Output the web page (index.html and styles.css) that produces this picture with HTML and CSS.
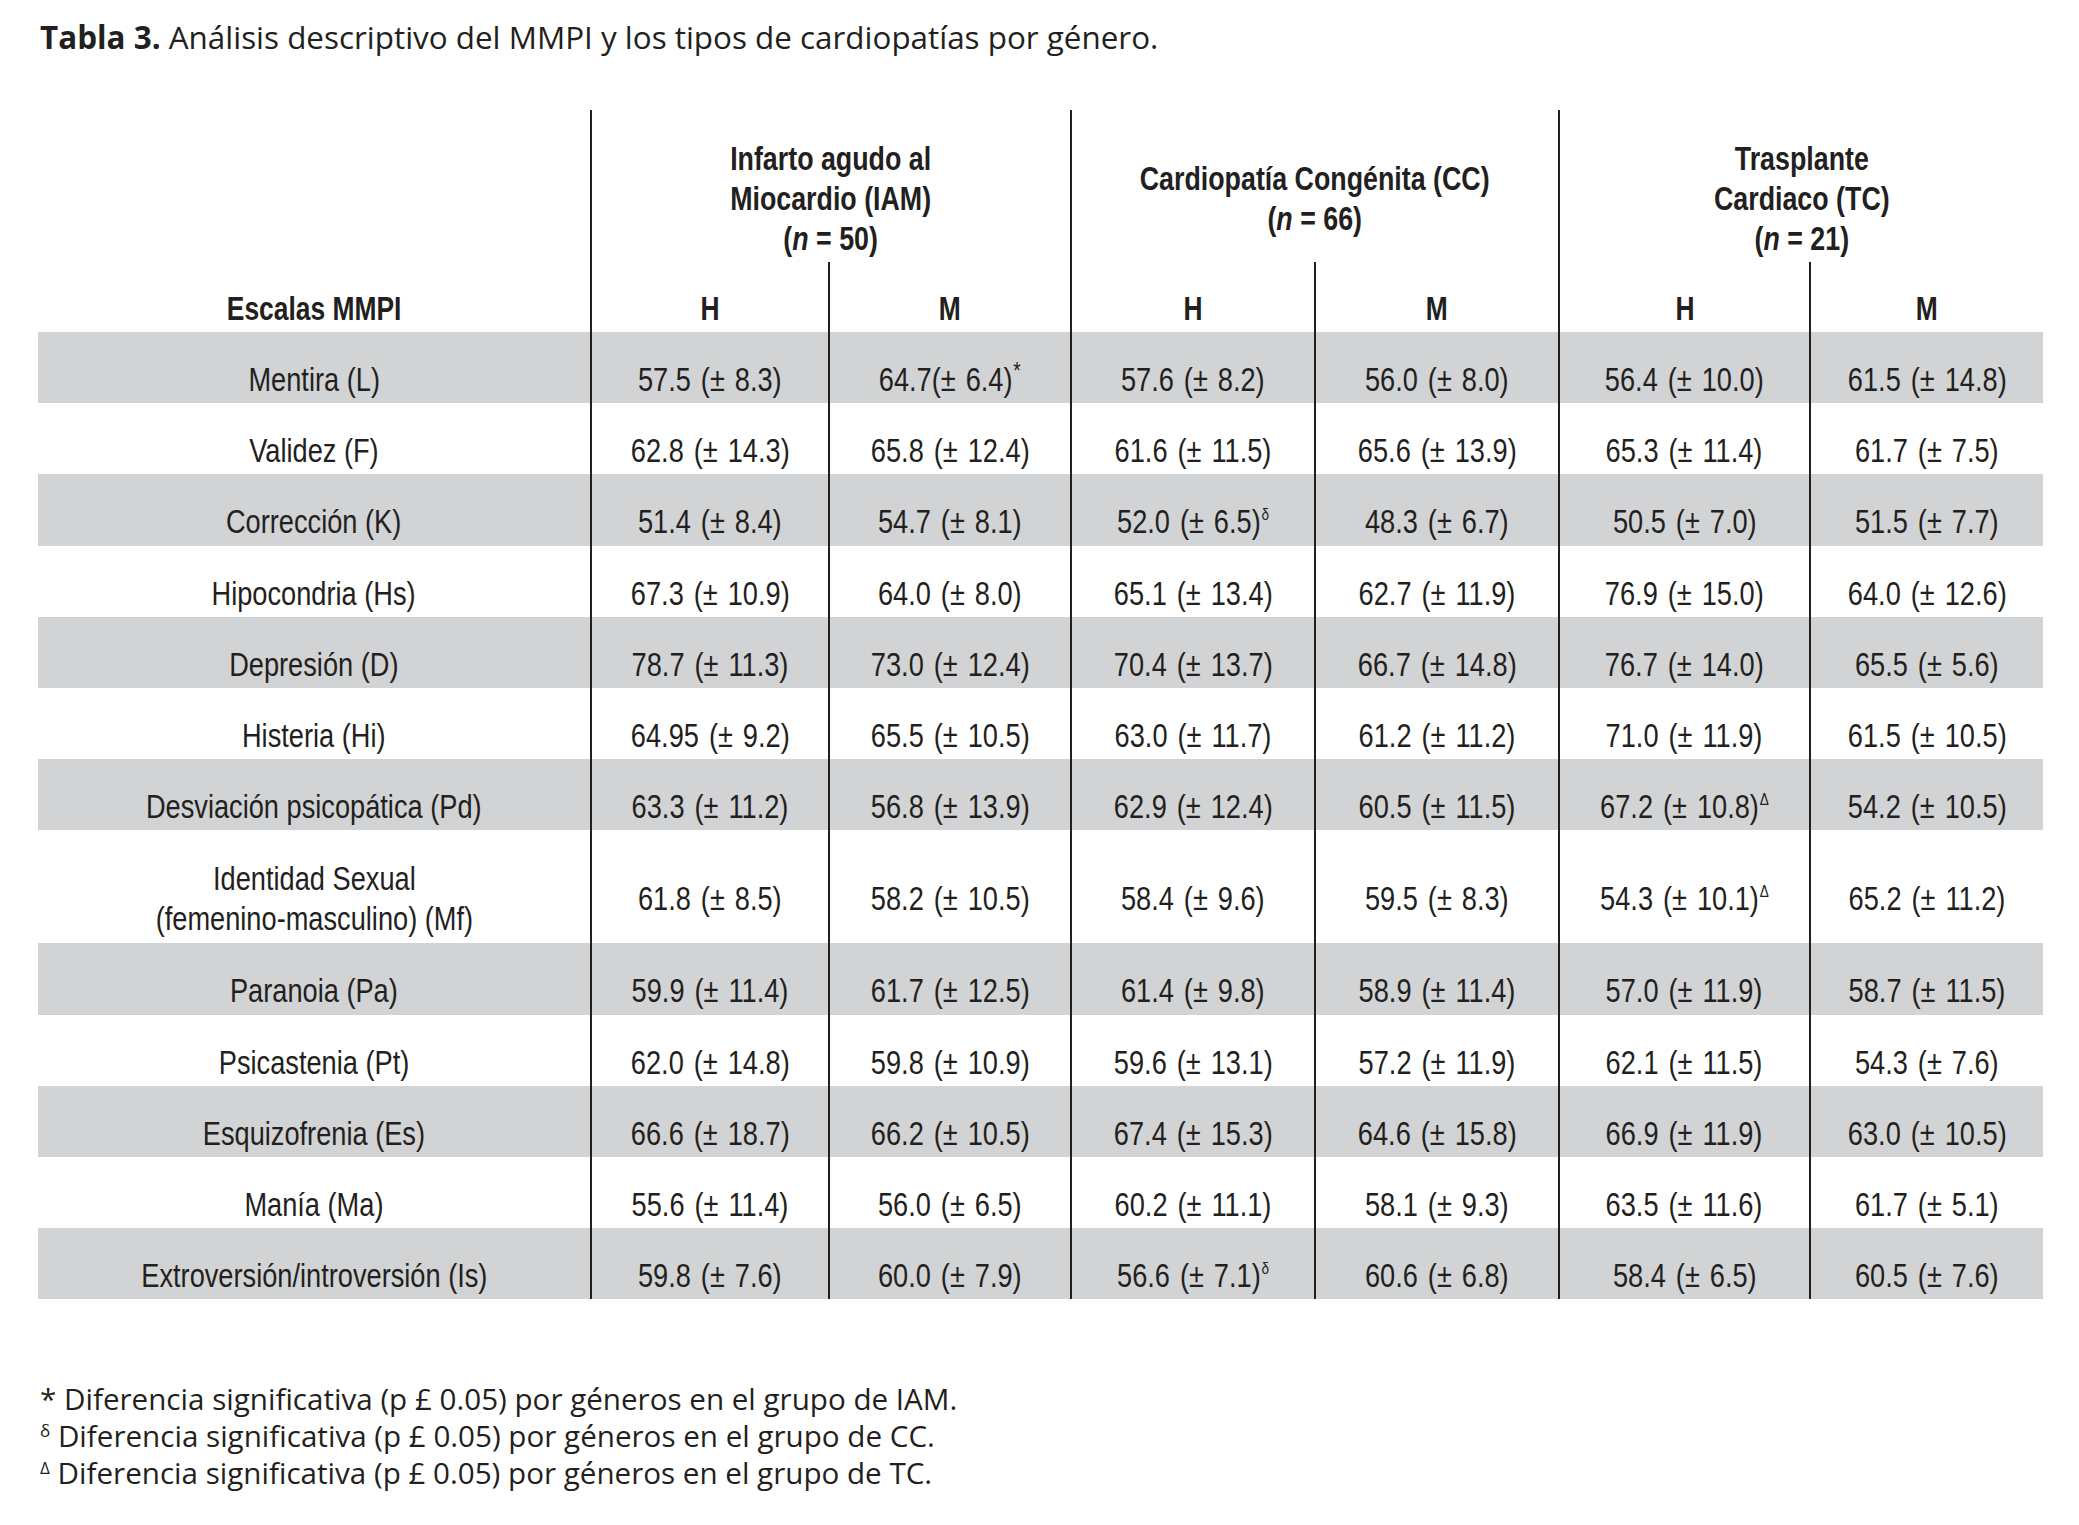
FILE: index.html
```html
<!DOCTYPE html>
<html lang="es">
<head>
<meta charset="utf-8">
<title>Tabla 3</title>
<link rel="stylesheet" href="styles.css">
</head>
<body>
<div class="page">
  <p class="caption"><b>Tabla 3.</b> Análisis descriptivo del MMPI y los tipos de cardiopatías por género.</p>

  <div class="table">
    <div class="blank"></div>
    <div class="group"><span class="t">Infarto agudo al<br>Miocardio (IAM)<br>(<i>n</i> = 50)</span></div>
    <div class="group"><span class="t">Cardiopatía Congénita (CC)<br>(<i>n</i> = 66)</span></div>
    <div class="group"><span class="t">Trasplante<br>Cardiaco (TC)<br>(<i>n</i> = 21)</span></div>

    <div class="colhead"><span class="t">Escalas MMPI</span></div>
    <div class="colhead v"><span class="t">H</span></div>
    <div class="colhead v"><span class="t">M</span></div>
    <div class="colhead v"><span class="t">H</span></div>
    <div class="colhead v"><span class="t">M</span></div>
    <div class="colhead v"><span class="t">H</span></div>
    <div class="colhead v"><span class="t">M</span></div>

    <div class="row gray">
      <div class="cell"><span class="t">Mentira (L)</span></div>
      <div class="cell v"><span class="t">57.5 (± 8.3)</span></div>
      <div class="cell v"><span class="t">64.7(± 6.4)<sup class="ast">*</sup></span></div>
      <div class="cell v"><span class="t">57.6 (± 8.2)</span></div>
      <div class="cell v"><span class="t">56.0 (± 8.0)</span></div>
      <div class="cell v"><span class="t">56.4 (± 10.0)</span></div>
      <div class="cell v"><span class="t">61.5 (± 14.8)</span></div>
    </div>
    <div class="row">
      <div class="cell"><span class="t">Validez (F)</span></div>
      <div class="cell v"><span class="t">62.8 (± 14.3)</span></div>
      <div class="cell v"><span class="t">65.8 (± 12.4)</span></div>
      <div class="cell v"><span class="t">61.6 (± 11.5)</span></div>
      <div class="cell v"><span class="t">65.6 (± 13.9)</span></div>
      <div class="cell v"><span class="t">65.3 (± 11.4)</span></div>
      <div class="cell v"><span class="t">61.7 (± 7.5)</span></div>
    </div>
    <div class="row gray">
      <div class="cell"><span class="t">Corrección (K)</span></div>
      <div class="cell v"><span class="t">51.4 (± 8.4)</span></div>
      <div class="cell v"><span class="t">54.7 (± 8.1)</span></div>
      <div class="cell v"><span class="t">52.0 (± 6.5)<sup>δ</sup></span></div>
      <div class="cell v"><span class="t">48.3 (± 6.7)</span></div>
      <div class="cell v"><span class="t">50.5 (± 7.0)</span></div>
      <div class="cell v"><span class="t">51.5 (± 7.7)</span></div>
    </div>
    <div class="row">
      <div class="cell"><span class="t">Hipocondria (Hs)</span></div>
      <div class="cell v"><span class="t">67.3 (± 10.9)</span></div>
      <div class="cell v"><span class="t">64.0 (± 8.0)</span></div>
      <div class="cell v"><span class="t">65.1 (± 13.4)</span></div>
      <div class="cell v"><span class="t">62.7 (± 11.9)</span></div>
      <div class="cell v"><span class="t">76.9 (± 15.0)</span></div>
      <div class="cell v"><span class="t">64.0 (± 12.6)</span></div>
    </div>
    <div class="row gray">
      <div class="cell"><span class="t">Depresión (D)</span></div>
      <div class="cell v"><span class="t">78.7 (± 11.3)</span></div>
      <div class="cell v"><span class="t">73.0 (± 12.4)</span></div>
      <div class="cell v"><span class="t">70.4 (± 13.7)</span></div>
      <div class="cell v"><span class="t">66.7 (± 14.8)</span></div>
      <div class="cell v"><span class="t">76.7 (± 14.0)</span></div>
      <div class="cell v"><span class="t">65.5 (± 5.6)</span></div>
    </div>
    <div class="row">
      <div class="cell"><span class="t">Histeria (Hi)</span></div>
      <div class="cell v"><span class="t">64.95 (± 9.2)</span></div>
      <div class="cell v"><span class="t">65.5 (± 10.5)</span></div>
      <div class="cell v"><span class="t">63.0 (± 11.7)</span></div>
      <div class="cell v"><span class="t">61.2 (± 11.2)</span></div>
      <div class="cell v"><span class="t">71.0 (± 11.9)</span></div>
      <div class="cell v"><span class="t">61.5 (± 10.5)</span></div>
    </div>
    <div class="row gray">
      <div class="cell"><span class="t">Desviación psicopática (Pd)</span></div>
      <div class="cell v"><span class="t">63.3 (± 11.2)</span></div>
      <div class="cell v"><span class="t">56.8 (± 13.9)</span></div>
      <div class="cell v"><span class="t">62.9 (± 12.4)</span></div>
      <div class="cell v"><span class="t">60.5 (± 11.5)</span></div>
      <div class="cell v"><span class="t">67.2 (± 10.8)<sup>Δ</sup></span></div>
      <div class="cell v"><span class="t">54.2 (± 10.5)</span></div>
    </div>
    <div class="row tall">
      <div class="cell"><span class="t">Identidad Sexual<br>(femenino-masculino) (Mf)</span></div>
      <div class="cell v"><span class="t">61.8 (± 8.5)</span></div>
      <div class="cell v"><span class="t">58.2 (± 10.5)</span></div>
      <div class="cell v"><span class="t">58.4 (± 9.6)</span></div>
      <div class="cell v"><span class="t">59.5 (± 8.3)</span></div>
      <div class="cell v"><span class="t">54.3 (± 10.1)<sup>Δ</sup></span></div>
      <div class="cell v"><span class="t">65.2 (± 11.2)</span></div>
    </div>
    <div class="row gray">
      <div class="cell"><span class="t">Paranoia (Pa)</span></div>
      <div class="cell v"><span class="t">59.9 (± 11.4)</span></div>
      <div class="cell v"><span class="t">61.7 (± 12.5)</span></div>
      <div class="cell v"><span class="t">61.4 (± 9.8)</span></div>
      <div class="cell v"><span class="t">58.9 (± 11.4)</span></div>
      <div class="cell v"><span class="t">57.0 (± 11.9)</span></div>
      <div class="cell v"><span class="t">58.7 (± 11.5)</span></div>
    </div>
    <div class="row">
      <div class="cell"><span class="t">Psicastenia (Pt)</span></div>
      <div class="cell v"><span class="t">62.0 (± 14.8)</span></div>
      <div class="cell v"><span class="t">59.8 (± 10.9)</span></div>
      <div class="cell v"><span class="t">59.6 (± 13.1)</span></div>
      <div class="cell v"><span class="t">57.2 (± 11.9)</span></div>
      <div class="cell v"><span class="t">62.1 (± 11.5)</span></div>
      <div class="cell v"><span class="t">54.3 (± 7.6)</span></div>
    </div>
    <div class="row gray">
      <div class="cell"><span class="t">Esquizofrenia (Es)</span></div>
      <div class="cell v"><span class="t">66.6 (± 18.7)</span></div>
      <div class="cell v"><span class="t">66.2 (± 10.5)</span></div>
      <div class="cell v"><span class="t">67.4 (± 15.3)</span></div>
      <div class="cell v"><span class="t">64.6 (± 15.8)</span></div>
      <div class="cell v"><span class="t">66.9 (± 11.9)</span></div>
      <div class="cell v"><span class="t">63.0 (± 10.5)</span></div>
    </div>
    <div class="row">
      <div class="cell"><span class="t">Manía (Ma)</span></div>
      <div class="cell v"><span class="t">55.6 (± 11.4)</span></div>
      <div class="cell v"><span class="t">56.0 (± 6.5)</span></div>
      <div class="cell v"><span class="t">60.2 (± 11.1)</span></div>
      <div class="cell v"><span class="t">58.1 (± 9.3)</span></div>
      <div class="cell v"><span class="t">63.5 (± 11.6)</span></div>
      <div class="cell v"><span class="t">61.7 (± 5.1)</span></div>
    </div>
    <div class="row gray">
      <div class="cell"><span class="t">Extroversión/introversión (Is)</span></div>
      <div class="cell v"><span class="t">59.8 (± 7.6)</span></div>
      <div class="cell v"><span class="t">60.0 (± 7.9)</span></div>
      <div class="cell v"><span class="t">56.6 (± 7.1)<sup>δ</sup></span></div>
      <div class="cell v"><span class="t">60.6 (± 6.8)</span></div>
      <div class="cell v"><span class="t">58.4 (± 6.5)</span></div>
      <div class="cell v"><span class="t">60.5 (± 7.6)</span></div>
    </div>
  </div>

  <div class="notes">
    <p>* Diferencia significativa (p £ 0.05) por géneros en el grupo de IAM.</p>
    <p><span class="mark">δ</span> Diferencia significativa (p £ 0.05) por géneros en el grupo de CC.</p>
    <p><span class="mark">Δ</span> Diferencia significativa (p £ 0.05) por géneros en el grupo de TC.</p>
  </div>
</div>
</body>
</html>
```

FILE: styles.css
```css
html, body {
  margin: 0;
  padding: 0;
  background: #ffffff;
}

body {
  color: #231f20;
}

.page {
  padding-left: 38px;
  width: 2010px;
}

.caption {
  margin: 0;
  padding: 16px 0 0 2px;
  height: 110px;
  box-sizing: border-box;
  font-family: "Open Sans", "DejaVu Sans", sans-serif;
  font-size: 31.4px;
  line-height: 42px;
  color: #231f20;
  white-space: nowrap;
}

.caption b {
  font-weight: 700;
}

.table {
  display: grid;
  grid-template-columns: 552px 238px 242px 244px 244px 251px 234px;
  font-family: "Liberation Sans", Arial, sans-serif;
  color: #231f20;
}

.t {
  display: inline-block;
  transform: scaleX(0.8);
  transform-origin: center;
  white-space: nowrap;
}

.group {
  grid-column: span 2;
  height: 152px;
  box-sizing: border-box;
  padding-top: 26px;
  border-left: 2px solid #231f20;
  display: flex;
  align-items: center;
  justify-content: center;
  text-align: center;
  font-weight: 700;
  font-size: 33.5px;
  line-height: 40px;
  white-space: nowrap;
}

.group i {
  font-style: italic;
}

.colhead {
  height: 70px;
  box-sizing: border-box;
  padding-top: 27px;
  text-align: center;
  font-weight: 700;
  font-size: 33px;
  line-height: 40px;
}

.v {
  border-left: 2px solid #231f20;
}

.row {
  display: contents;
}

.cell {
  box-sizing: border-box;
  min-height: 71.2px;
  padding: 27px 0 4px;
  display: flex;
  align-items: center;
  justify-content: center;
  text-align: center;
  font-size: 34px;
  line-height: 40px;
  white-space: nowrap;
}

.cell.v {
  word-spacing: 3px;
}

.row.tall .cell {
  min-height: 113px;
  padding: 28px 0 5px;
}

.row.gray .cell {
  background: #d1d3d4;
}

.cell sup {
  font-size: 17px;
  line-height: 0;
  vertical-align: 0.8em;
  margin-left: 1px;
}

.cell sup.ast {
  font-size: 24px;
  vertical-align: 0.5em;
}

.notes {
  margin-top: 81px;
  padding-left: 2px;
  font-family: "Open Sans", "DejaVu Sans", sans-serif;
  font-size: 29.6px;
  line-height: 37px;
  color: #231f20;
  white-space: nowrap;
}

.notes p {
  margin: 0;
}

.notes .mark {
  font-size: 17px;
  vertical-align: 0.6em;
  line-height: 0;
}
```
